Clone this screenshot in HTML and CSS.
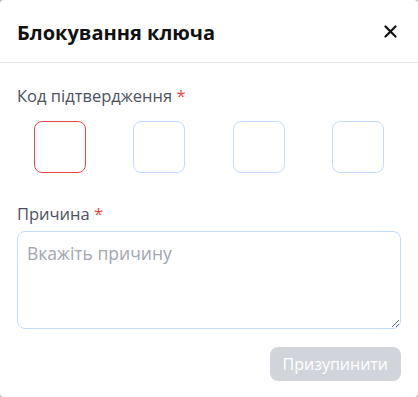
FILE: index.html
```html
<!DOCTYPE html>
<html lang="uk">

<head>
    <meta charset="UTF-8">
    <meta name="viewport" content="width=device-width, initial-scale=1.0">
    <title>Блокування ключа</title>
    <link rel="stylesheet" href="styles.css">
</head>

<body>
    <div class="modal">
        <div class="modal-header">
            <b class="modal-title">Блокування ключа</b>
            <button class="close-btn" type="button" aria-label="Закрити">
                <svg width="13" height="13" viewBox="0 0 13 13">
                    <path d="M1.5 1.5 L11.5 11.5 M11.5 1.5 L1.5 11.5" stroke="#111" stroke-width="2.2" stroke-linecap="round" />
                </svg>
            </button>
        </div>
        <form class="modal-body" onsubmit="event.preventDefault()">
            <label class="field-label">Код підтвердження <span class="req">*</span></label>
            <div class="code-row">
                <input class="code-cell error" type="text" maxlength="1">
                <input class="code-cell" type="text" maxlength="1">
                <input class="code-cell" type="text" maxlength="1">
                <input class="code-cell" type="text" maxlength="1">
            </div>

            <label class="field-label reason-label">Причина <span class="req">*</span></label>
            <textarea class="reason" placeholder="Вкажіть причину"></textarea>

            <div class="actions">
                <button class="submit-btn" type="submit" disabled>Призупинити</button>
            </div>
        </form>
    </div>
</body>

</html>
```

FILE: styles.css
```css
html,
body {
    margin: 0;
    height: 100%;
    background: #b4b7bd;
}

body {
    font-family: "Open Sans", "Noto Sans", sans-serif;
}

.modal {
    background: #fff;
    height: 100%;
    border-radius: 4px;
    overflow: hidden;
    box-sizing: border-box;
}

.modal-header {
    display: flex;
    align-items: center;
    justify-content: space-between;
    height: 62px;
    padding: 0 17px;
    border-bottom: 1px solid #e6e6e6;
}

.modal-title {
    font-size: 20px;
    font-weight: 700;
    color: #111;
    padding-top: 2px;
}

.close-btn {
    border: none;
    background: none;
    padding: 0;
    margin-right: 4px;
    display: flex;
    cursor: pointer;
}

.modal-body {
    padding: 21px 17px 0;
    display: flex;
    flex-direction: column;
}

.field-label {
    font-size: 16.5px;
    color: #4b5160;
    line-height: 24px;
}

.req {
    color: #ef4444;
}

.code-row {
    display: flex;
    justify-content: space-between;
    padding: 0 17px;
    margin-top: 13px;
}

.code-cell {
    width: 52px;
    height: 52px;
    box-sizing: border-box;
    border: 1px solid #c4dbfb;
    border-radius: 8px;
    outline: none;
    text-align: center;
    font-size: 20px;
}

.code-cell.error {
    border-color: #ef4444;
}

.reason-label {
    margin-top: 29px;
}

.reason {
    margin-top: 5px;
    height: 98px;
    box-sizing: border-box;
    border: 1px solid #c4dbfb;
    border-radius: 8px;
    padding: 9px 9px;
    font-family: inherit;
    font-size: 17.5px;
    color: #333;
    outline: none;
}

.reason::placeholder {
    color: #a1a6b0;
}

.actions {
    display: flex;
    justify-content: flex-end;
    margin-top: 18px;
}

.submit-btn {
    background: #d1d5db;
    color: #fff;
    border: none;
    border-radius: 8px;
    font-family: inherit;
    font-size: 16px;
    height: 34px;
    padding: 0 13px;
}
```
